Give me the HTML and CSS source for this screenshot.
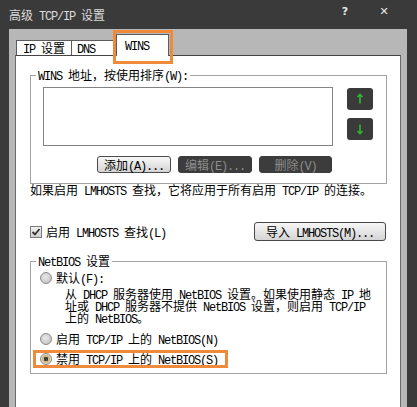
FILE: index.html
```html
<!DOCTYPE html>
<html lang="zh-CN">
<head>
    <meta charset="utf-8">
    <title>高级 TCP/IP 设置</title>
    <link rel="stylesheet" href="styles.css">
</head>
<body>
    <div class="titlebar">
        <span class="title">高级<span class="en"> TCP/IP </span>设置</span>
        <span class="tbtn help">?</span>
        <span class="tbtn close">✕</span>
    </div>
    <div class="frame">
        <div class="tabs">
            <div class="tab t-ip"><span class="en">IP </span>设置</div>
            <div class="tab t-dns"><span class="en">DNS</span></div>
            <div class="tab active"><span class="en">WINS</span><span class="mark"></span></div>
        </div>
        <div class="panel">
            <fieldset class="group wins">
                <legend><span class="en">WINS </span>地址，按使用排序<span class="en">(W):</span></legend>
                <div class="listrow">
                    <div class="listbox"></div>
                    <div class="arrows">
                        <span class="abtn"><svg width="26" height="22" viewBox="0 0 26 22"><path d="M13 6.5V15.5M10.5 9L13 6.5L15.5 9" stroke="#2fb82f" stroke-width="1.6" fill="none"/></svg></span>
                        <span class="abtn"><svg width="26" height="22" viewBox="0 0 26 22"><path d="M13 6.5V15.5M10.5 13L13 15.5L15.5 13" stroke="#2fb82f" stroke-width="1.6" fill="none"/></svg></span>
                    </div>
                </div>
                <div class="btnrow">
                    <div class="btn b-add"><span>添加<span class="en">(A)...</span></span></div>
                    <div class="btn off"><span>编辑<span class="en">(E)...</span></span></div>
                    <div class="btn off b-del"><span>删除<span class="en">(V)</span></span></div>
                </div>
            </fieldset>
            <p class="note">如果启用<span class="en"> LMHOSTS </span>查找，它将应用于所有启用<span class="en"> TCP/IP </span>的连接。</p>
            <div class="lmrow">
                <div class="check">
                    <span class="box"><svg width="10" height="10" viewBox="0 0 10 10"><path d="M1.5 5L4 7.5L8.5 2" stroke="#333" stroke-width="1.8" fill="none"/><path d="M2.5 4.5L4 6" stroke="#a89a5a" stroke-width="1" fill="none"/></svg></span>
                    <span>启用<span class="en"> LMHOSTS </span>查找<span class="en">(L)</span></span>
                </div>
                <div class="btn import"><span>导入<span class="en"> LMHOSTS(M)...</span></span></div>
            </div>
            <fieldset class="group netbios">
                <legend><span class="en">NetBIOS </span>设置</legend>
                <div class="radio"><span class="dot"></span><span>默认<span class="en">(F):</span></span></div>
                <p class="desc">从<span class="en"> DHCP </span>服务器使用<span class="en"> NetBIOS </span>设置。如果使用静态<span class="en"> IP </span>地<br>址或<span class="en"> DHCP </span>服务器不提供<span class="en"> NetBIOS </span>设置，则启用<span class="en"> TCP/IP</span><br>上的<span class="en"> NetBIOS</span>。</p>
                <div class="radio r2"><span class="dot"></span><span>启用<span class="en"> TCP/IP </span>上的<span class="en"> NetBIOS(N)</span></span></div>
                <div class="radio r3"><span class="dot on"></span><span>禁用<span class="en"> TCP/IP </span>上的<span class="en"> NetBIOS(S)</span></span></div>
            </fieldset>
        </div>
    </div>
</body>
</html>
```

FILE: styles.css
```css
*{margin:0;padding:0;box-sizing:border-box;}
body{width:417px;height:407px;overflow:hidden;background:#3a3a3a;color:#000;font:12px/12px "Noto Sans CJK SC",sans-serif;}
.en{font-family:"Liberation Mono","Noto Sans CJK SC",monospace;letter-spacing:-1.2px;line-height:0;}

/* title bar */
.titlebar{height:29px;display:flex;align-items:center;padding:0 27px 0 9px;color:#dcdcdc;}
.title{flex:1;}
.tbtn{width:12px;margin-bottom:6px;text-align:center;font:bold 11px/12px "DejaVu Sans",sans-serif;color:#e6e6e6;}
.help{margin-right:27px;}

/* window body */
.frame{width:398px;height:378px;margin-left:9px;padding:5px 6px 0 6px;background:#b7b7b7;}
.tabs{display:flex;align-items:flex-end;height:22px;margin-bottom:-1px;padding-left:1px;position:relative;z-index:1;}
.tab{height:15px;margin-bottom:1px;padding:1px 0 0 6px;border:1px solid #5c5c5c;border-bottom:none;background:#fff;}
.t-ip{width:56px;}
.t-dns{width:44px;margin-left:-1px;padding-left:5px;}
.tab.active{width:53px;height:22px;margin:0 0 0 1px;padding:4px 0 0 8px;position:relative;}
.mark{position:absolute;left:-4px;top:-5px;width:60px;height:34px;border:3px solid #ee8a3a;}

.panel{height:360px;padding:0 13px 0 14px;background:#fff;border:1px solid #6a6a6a;border-top-color:#444;}

.group{border:1px solid #a3a3a3;}
.group legend{padding:0 2px;line-height:12px;}
.wins{margin-top:13px;padding:6px 12px 10px 12px;}
.wins legend{margin-left:-7px;}
.listrow{display:flex;}
.listbox{width:290px;height:59px;border:1px solid #828282;}
.arrows{display:flex;flex-direction:column;gap:8px;margin-left:14px;padding-top:1px;}
.abtn{display:block;width:26px;height:22px;background:#3a3a3a;border-radius:3px;}
.abtn svg{display:block;}
.btnrow{display:flex;gap:7px;margin:10px 0 0 54px;}
.btn{display:flex;align-items:center;justify-content:center;width:74px;height:17px;border:1px solid #4a4a4a;border-radius:3px;background:linear-gradient(#f7f7f7,#d4d4d4);}
.btn.off{background:#3c3c3c;border-color:#3c3c3c;color:#8c8c8c;}
.b-del{width:73px;}

.note{line-height:12px;}
.lmrow{display:flex;justify-content:space-between;align-items:center;margin-top:26px;padding-right:1px;}
.check{display:flex;align-items:center;}
.box{display:flex;align-items:center;justify-content:center;width:12px;height:12px;margin-right:4px;border:1px solid #7a7a7a;background:linear-gradient(#f2f2f2,#cfcfcf);}
.import{width:132px;height:19px;justify-content:flex-start;padding-left:11px;}

.netbios{margin-top:14px;padding:5px 9px 8px 9px;}
.netbios legend{margin-left:-4px;}
.radio{display:flex;align-items:center;height:12px;}
.dot{width:12px;height:12px;margin-right:4px;border-radius:50%;border:1px solid #8a8a8a;background:radial-gradient(circle at 45% 40%,#e8e8e8,#bcbcbc);}
.dot.on{background:radial-gradient(circle,#3e3e3e 0 2px,#d4bb7c 2.5px 4px,#dadada 4.5px);}
.desc{margin:4px 0 0 25px;line-height:12px;}
.r2{margin-top:9px;}
.r3{width:189px;margin:8px 0 0 -4px;padding-left:4px;outline:3px solid #ee8a3a;}
```
